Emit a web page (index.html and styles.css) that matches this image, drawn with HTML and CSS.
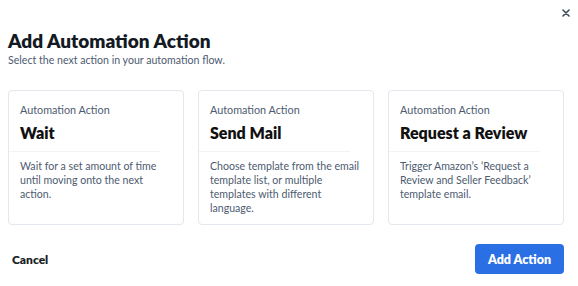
FILE: index.html
```html
<!DOCTYPE html>
<html lang="en">
  <head>
    <meta charset="UTF-8" />
    <meta name="viewport" content="width=device-width, initial-scale=1.0" />
    <title>Add Automation Action</title>
    <link rel="stylesheet" href="styles.css">
  </head>
  <body>
    <div class="modal">
      <div class="top">
        <button class="close" aria-label="Close">
          <svg width="8" height="8" viewBox="0 0 8 8">
            <path d="M1 1 L7 7 M7 1 L1 7" stroke="#3f4a5a" stroke-width="1.6" stroke-linecap="round" />
          </svg>
        </button>
      </div>
      <h1 class="title">Add Automation Action</h1>
      <p class="subtitle">Select the next action in your automation flow.</p>

      <div class="cards">
        <div class="card">
          <div class="card-head">
            <span class="label">Automation Action</span>
            <span class="name">Wait</span>
          </div>
          <p class="desc">Wait for a set amount of time until moving onto the next action.</p>
        </div>
        <div class="card">
          <div class="card-head">
            <span class="label">Automation Action</span>
            <span class="name">Send Mail</span>
          </div>
          <p class="desc">Choose template from the email template list, or multiple templates with different language.</p>
        </div>
        <div class="card">
          <div class="card-head">
            <span class="label">Automation Action</span>
            <span class="name">Request a Review</span>
          </div>
          <p class="desc">Trigger Amazon’s ‘Request a Review and Seller Feedback’ template email.</p>
        </div>
      </div>

      <div class="footer">
        <button class="cancel">Cancel</button>
        <button class="add">Add Action</button>
      </div>
    </div>
  </body>
</html>
```

FILE: styles.css
```css
body {
  margin: 0;
  padding: 0;
  background: white;
  font-family: Lato, "Open Sans", sans-serif;
}
.modal {
  width: 578px;
  height: 286px;
  box-sizing: border-box;
  padding: 5px 4px 0 8px;
}
.top {
  display: flex;
  justify-content: flex-end;
  height: 16px;
}
.close {
  border: none;
  background: none;
  padding: 0;
  width: 16px;
  height: 16px;
  display: flex;
  align-items: center;
  justify-content: center;
  cursor: pointer;
}
.title {
  margin: 8px 0 0 0;
  font-size: 19px;
  line-height: 24px;
  font-weight: 800;
  color: #141a24;
}
.subtitle {
  margin: 0;
  font-size: 10.6px;
  line-height: 14px;
  color: #4d5b70;
}
.cards {
  display: flex;
  gap: 14px;
  margin-top: 23px;
  width: 556px;
}
.card {
  flex: 1;
  height: 135px;
  box-sizing: border-box;
  border: 1px solid #e3e7ee;
  border-radius: 4px;
}
.card-head {
  display: flex;
  flex-direction: column;
  width: 151px;
  padding: 12px 0 8px 11px;
  box-sizing: border-box;
  border-bottom: 1px solid #f1f3f6;
}
.label {
  font-size: 10.8px;
  line-height: 14px;
  color: #4d5b70;
}
.name {
  margin-top: 5px;
  font-size: 16px;
  line-height: 21px;
  font-weight: 800;
  color: #111;
}
.desc {
  margin: 7px 8px 0 11px;
  font-size: 10.6px;
  line-height: 14px;
  color: #4d5b70;
}
.footer {
  display: flex;
  justify-content: space-between;
  align-items: center;
  width: 556px;
  margin-top: 19px;
}
.cancel {
  border: none;
  background: none;
  padding: 0 0 0 4px;
  font-family: inherit;
  font-size: 12px;
  font-weight: 800;
  color: #1a1f27;
  cursor: pointer;
}
.add {
  width: 89px;
  height: 30px;
  border: none;
  border-radius: 4px;
  background: #2b6fe5;
  color: white;
  font-family: inherit;
  font-size: 12.5px;
  font-weight: 800;
  cursor: pointer;
}
```
